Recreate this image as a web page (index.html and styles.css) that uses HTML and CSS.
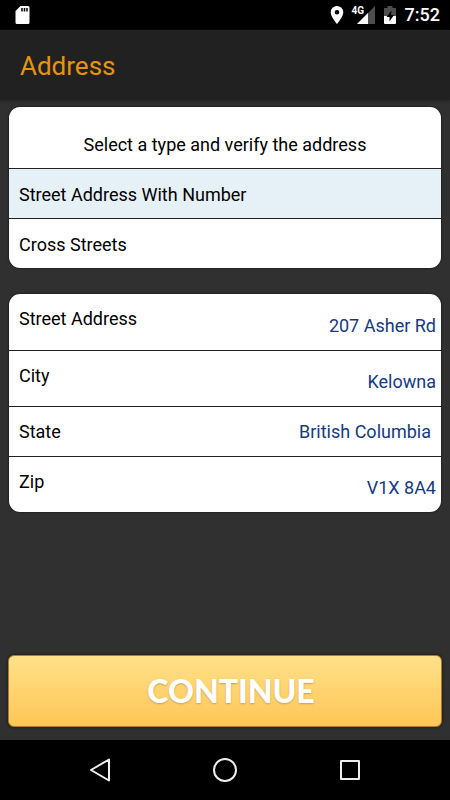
FILE: index.html
```html
<!DOCTYPE html>
<html lang="en">
<head>
<meta charset="utf-8">
<meta name="viewport" content="width=device-width, initial-scale=1">
<title>Address</title>
<link rel="stylesheet" href="styles.css">
</head>
<body>
<div class="status-bar">
  <svg class="sd-icon" width="16" height="20" viewBox="0 0 16 20" aria-hidden="true">
    <path fill="#fff" d="M6.500 1H14a1.500 1.500 0 0 1 1.500 1.500v15A1.500 1.500 0 0 1 14 19H3A1.500 1.500 0 0 1 1.500 17.500V6z"/>
    <path stroke="#000" stroke-width="1.500" d="M8 3v3.500M10.500 3v3.500M13 3v3.500"/>
  </svg>
  <div class="status-right">
    <svg width="14" height="20" viewBox="0 0 14 20" aria-hidden="true">
      <path fill="#fff" fill-rule="evenodd" d="M7 1a6.300 6.300 0 0 0-6.300 6.300C.7 12 7 19 7 19s6.300-7 6.300-11.700A6.300 6.300 0 0 0 7 1zm0 4a2.300 2.300 0 1 1 0 4.600A2.300 2.300 0 0 1 7 5z"/>
    </svg>
    <div class="signal">
      <svg width="18" height="18" viewBox="0 0 18 18" aria-hidden="true">
        <path fill="#4d4d4d" d="M18 0v18H0z"/>
        <path fill="#fff" d="M11 7v11H0z"/>
      </svg>
      <span class="network">4G</span>
    </div>
    <svg width="12" height="20" viewBox="0 0 12 20" aria-hidden="true">
      <path fill="#4d4d4d" d="M3.500 1h5v2H12v8H0V3h3.500z"/>
      <path fill="#fff" d="M0 11h12v7a1 1 0 0 1-1 1H1a1 1 0 0 1-1-1z"/>
      <path fill="#000" d="M7.500 5.500 2.500 12h3v4.500L10 10H7z"/>
    </svg>
    <time class="clock">7:52</time>
  </div>
</div>
<header class="app-bar"><h1>Address</h1></header>
<form class="content">
  <fieldset class="card">
    <legend class="card-title">Select a type and verify the address</legend>
    <label class="option"><input type="radio" name="type" checked>Street Address With Number</label>
    <label class="option"><input type="radio" name="type">Cross Streets</label>
  </fieldset>
  <div class="card">
    <div class="field tall">
      <label for="street">Street Address</label>
      <input id="street" type="text" value="207 Asher Rd">
    </div>
    <div class="field tall">
      <label for="city">City</label>
      <input id="city" type="text" value="Kelowna">
    </div>
    <div class="field">
      <label for="state">State</label>
      <select id="state"><option>British Columbia</option></select>
    </div>
    <div class="field tall">
      <label for="zip">Zip</label>
      <input id="zip" type="text" value="V1X 8A4">
    </div>
  </div>
  <button class="continue" type="button">CONTINUE</button>
</form>
<nav class="nav-bar">
  <button type="button" aria-label="Back">
    <svg width="24" height="26" viewBox="0 0 24 26"><path d="M21 2.500v21L3 13z"/></svg>
  </button>
  <button type="button" aria-label="Home">
    <svg width="26" height="26" viewBox="0 0 26 26"><circle cx="13" cy="13" r="11"/></svg>
  </button>
  <button type="button" aria-label="Recent apps">
    <svg width="24" height="26" viewBox="0 0 24 26"><rect x="3" y="4" width="18" height="18"/></svg>
  </button>
</nav>
</body>
</html>
```

FILE: styles.css
```css
* {
  box-sizing: border-box;
}

body {
  margin: 0;
  min-height: 100vh;
  display: flex;
  flex-direction: column;
  background: #303030;
  color: #000;
  font: 18px/24px Roboto, sans-serif;
}

.status-bar {
  display: flex;
  align-items: center;
  justify-content: space-between;
  height: 30px;
  padding: 0 10px 0 14px;
  background: #000;
  color: #fff;
}

.status-right {
  display: flex;
  align-items: center;
  gap: 9px;
}

.status-bar svg {
  display: block;
}

.signal {
  position: relative;
  padding-left: 4px;
}

.network {
  position: absolute;
  top: 0;
  left: -1px;
  font-size: 10px;
  line-height: 10px;
  font-weight: 700;
}

.clock {
  font-weight: 500;
}

.app-bar {
  padding: 21px 20px 19px;
  background: #212121;
  box-shadow: 0 1px 3px #222;
}

.app-bar h1 {
  margin: 0;
  color: #e8940f;
  font-size: 26px;
  line-height: 30px;
  font-weight: 400;
}

.content {
  flex: 1;
  display: flex;
  flex-direction: column;
  padding: 7px 8px 13px;
}

.card {
  min-width: 0;
  margin: 0 1px 26px;
  padding: 0;
  border: 0;
  border-radius: 11px;
  overflow: hidden;
  background: #fff;
  box-shadow: 0 0 2px #000;
}

.card-title {
  float: left;
  width: 100%;
  padding: 26px 0 11px;
  text-align: center;
}

.option {
  clear: both;
  display: block;
  padding: 14px 10px 11px;
  border-top: 1px solid #222;
}

.option:has(:checked) {
  background: #e6f1f7;
}

.option input {
  position: absolute;
  opacity: 0;
}

.field {
  display: flex;
  align-items: center;
  min-height: 50px;
  padding: 0 5px 0 10px;
}

.field + .field {
  border-top: 1px solid #222;
}

.tall {
  min-height: 56px;
}

.tall label {
  padding-bottom: 6px;
}

.field input,
.field select {
  flex: 1;
  min-width: 0;
  height: 48px;
  padding: 0;
  border: 0;
  background: none;
  color: #163a80;
  font: inherit;
  text-align: right;
  appearance: none;
}

.field input {
  padding-top: 6px;
}

.field select {
  padding-right: 5px;
}

.continue {
  margin-top: auto;
  padding: 18px 0 18px 12px;
  border: 1px solid #b07a2c;
  border-radius: 6px;
  background: linear-gradient(#ffe18a, #ffc655);
  box-shadow: 0 0 3px #111;
  color: #fff;
  font: 900 32px/34px Lato, sans-serif;
  text-shadow: 0 1px 2px #c9a05a;
}

.nav-bar {
  display: flex;
  justify-content: center;
  gap: 25px;
  height: 60px;
  background: #000;
}

.nav-bar button {
  display: grid;
  place-items: center;
  width: 100px;
  padding: 0;
  border: 0;
  background: none;
}

.nav-bar svg {
  fill: none;
  stroke: #eee;
  stroke-width: 2;
  stroke-linejoin: round;
}
```
